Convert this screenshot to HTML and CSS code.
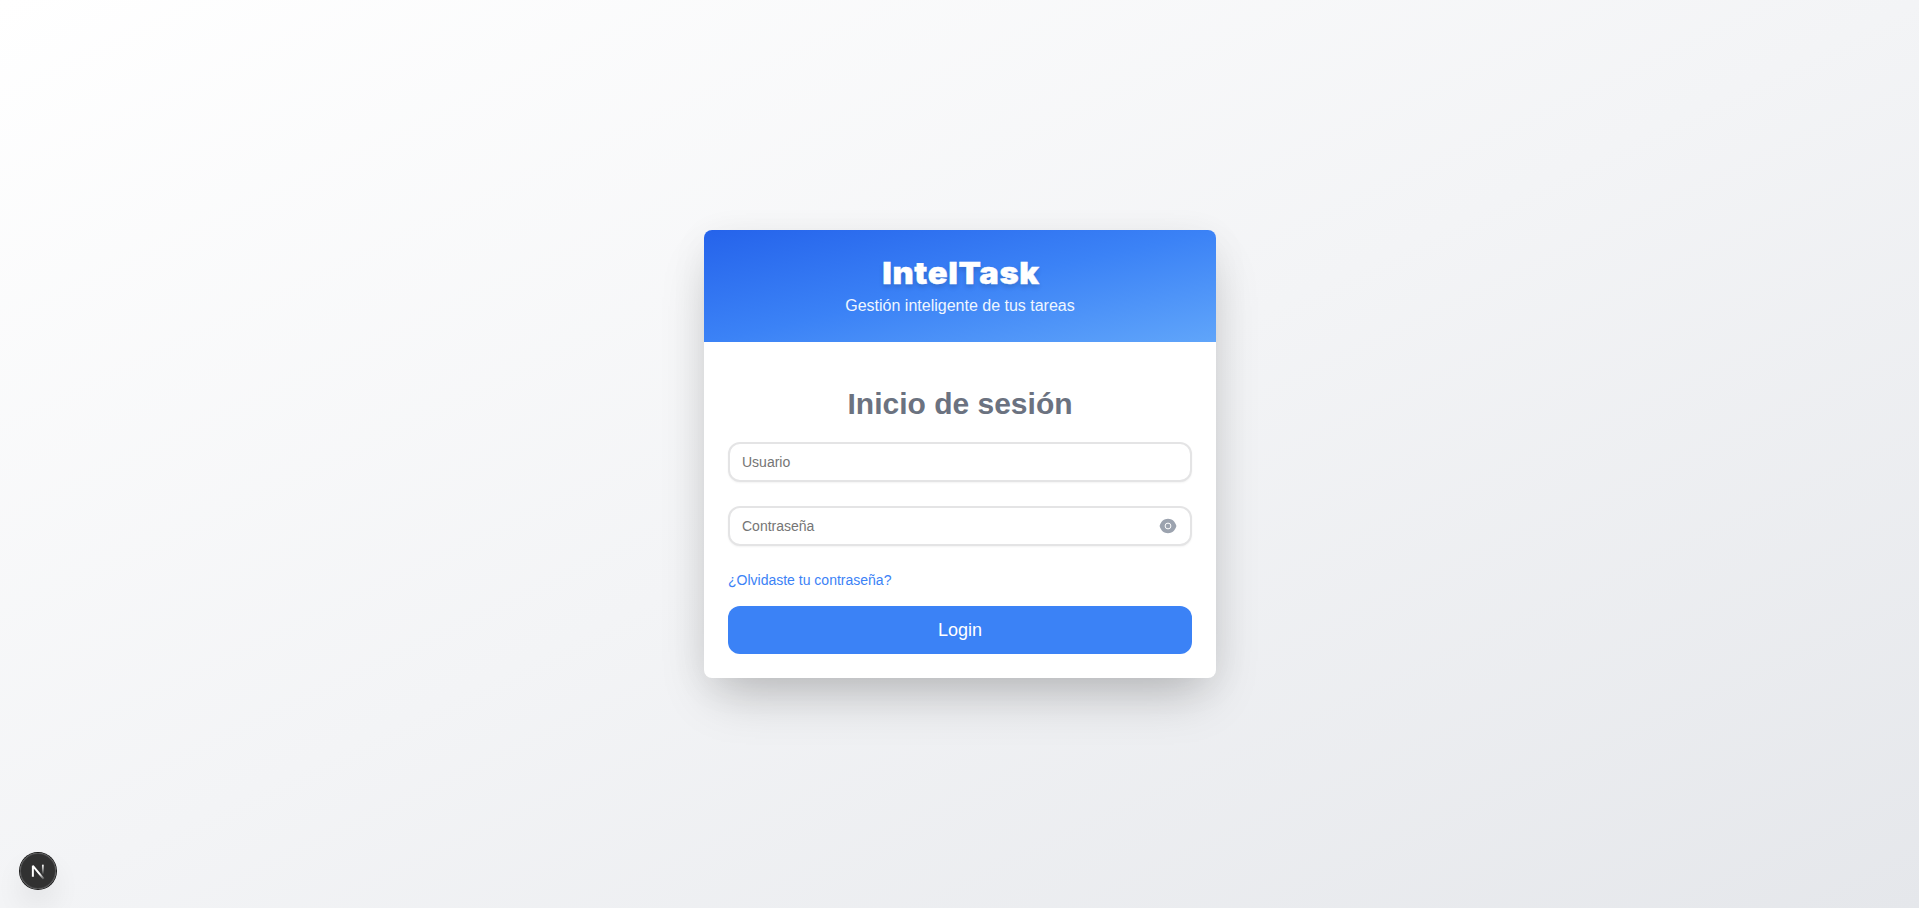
FILE: index.html
```html
<!DOCTYPE html>
<html lang="es">
<head>
<meta charset="utf-8">
<title>IntelTask</title>
<link rel="stylesheet" href="styles.css">
</head>
<body>
<main class="page">
  <section class="card">
    <header class="card-header">
      <h1 class="brand">IntelTask</h1>
      <p class="tagline">Gestión inteligente de tus tareas</p>
    </header>
    <form class="form">
      <h2 class="title">Inicio de sesión</h2>
      <input class="field" type="text" placeholder="Usuario">
      <div class="field-group">
        <input class="field" type="password" placeholder="Contraseña">
        <button class="toggle" type="button" aria-label="Mostrar contraseña">
          <svg viewBox="0 0 20 20" width="20" height="20"><path fill="currentColor" d="M10 2.8C14 2.8 17 5.6 18.2 9.3Q18.5 10 18.2 10.7C17 14.4 14 17.2 10 17.2S3 14.4 1.8 10.7Q1.5 10 1.8 9.3C3 5.6 6 2.8 10 2.8z"/><circle cx="10" cy="10" r="2.9" fill="none" stroke="#fff" stroke-width="1"/></svg>
        </button>
      </div>
      <a class="forgot" href="#">¿Olvidaste tu contraseña?</a>
      <button class="login" type="button">Login</button>
    </form>
  </section>
</main>
<div class="dev-badge">
  <svg viewBox="0 0 40 40" width="36" height="36" fill="none">
    <defs>
      <linearGradient id="diag" x1="22" y1="23" x2="27" y2="30" gradientUnits="userSpaceOnUse"><stop stop-color="#fff"/><stop offset="1" stop-color="#fff" stop-opacity="0"/></linearGradient>
      <linearGradient id="stem" x1="25" y1="13" x2="25" y2="24" gradientUnits="userSpaceOnUse"><stop stop-color="#fff"/><stop offset="1" stop-color="#fff" stop-opacity="0"/></linearGradient>
    </defs>
    <path d="M14.3 26.5V14.2L26.3 28.8" stroke="url(#diag)" stroke-width="2.2" stroke-linejoin="bevel"/>
    <path d="M25.4 13V24" stroke="url(#stem)" stroke-width="2"/>
  </svg>
</div>
</body>
</html>
```
FILE: styles.css
```css
* { box-sizing: border-box; margin: 0; }
body { font-family: "Liberation Sans", Arial, sans-serif; }
.page {
  min-height: 100vh;
  display: flex;
  align-items: center;
  justify-content: center;
  background: linear-gradient(to bottom right, #fff, #f3f4f6, #e5e7eb);
}
.card {
  width: 512px;
  border-radius: 8px;
  overflow: hidden;
  background: #fff;
  box-shadow: 0 25px 50px -12px rgba(0, 0, 0, .23), 0 8px 40px rgba(0, 0, 0, .05);
}
.card-header {
  height: 112px;
  padding: 24px 0 0 1px;
  text-align: center;
  color: #fff;
  background: linear-gradient(to bottom right, #2563eb, #3b82f6, #60a5fa);
}
.brand {
  padding: 1px 0 0 1px;
  font: 900 30px/36px Inter, sans-serif;
  letter-spacing: .6px;
  -webkit-text-stroke: .4px #fff;
  text-shadow: 0 3px 5px rgba(0, 0, 0, .16);
  transform: scaleX(1.09);
}
.tagline { font-size: 16px; line-height: 24px; margin-top: 3px; color: #eff6ff; }
.form { display: flex; flex-direction: column; padding: 44px 24px 24px; }
.title {
  margin-bottom: 20px;
  padding-left: 1px;
  font-size: 30px;
  line-height: 36px;
  text-align: center;
  color: #6b7280;
}
.field {
  display: block;
  width: 100%;
  height: 40px;
  padding: 0 12.5px;
  border: 2px solid #e4e4e5;
  border-radius: 12px;
  background: #fff;
  font: 14px/20px "Liberation Sans", Arial, sans-serif;
  box-shadow: 0 1px 2px rgba(0, 0, 0, .05);
}
.field::placeholder { color: #757575; opacity: 1; }
.field-group { position: relative; margin-top: 24px; }
.toggle {
  position: absolute;
  right: 14px;
  top: 10px;
  display: flex;
  padding: 0;
  border: 0;
  background: none;
  color: #9ca3af;
}
.forgot {
  align-self: flex-start;
  margin: 24px 0 16px .5px;
  font-size: 14px;
  line-height: 20px;
  color: #3b82f6;
  text-decoration: none;
}
.login {
  height: 48px;
  padding-left: 7px;
  border: 0;
  border-radius: 12px;
  background: #3b82f6;
  color: #fff;
  font: 18px/28px "Liberation Sans", Arial, sans-serif;
}
.dev-badge {
  position: fixed;
  left: 20px;
  bottom: 19px;
  width: 36px;
  height: 36px;
  border-radius: 50%;
  background: rgba(0, 0, 0, .8);
  box-shadow: 0 0 0 1px #171717, inset 0 0 0 1px rgba(255, 255, 255, .14), 0 16px 32px -8px rgba(0, 0, 0, .24);
}
.dev-badge svg { display: block; }
```
